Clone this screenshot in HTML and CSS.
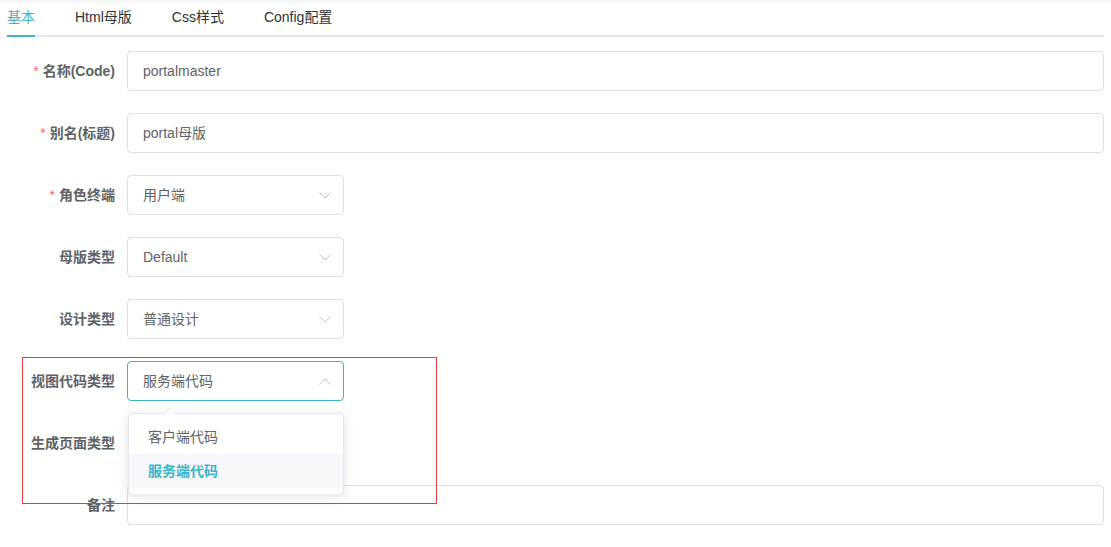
FILE: index.html
```html
<!DOCTYPE html>
<html lang="zh-CN">
<head>
<meta charset="utf-8">
<title>母版编辑</title>
<link rel="stylesheet" href="styles.css">
</head>
<body>
<div class="page">
  <div class="tabs">
    <div class="tab active">基本</div>
    <div class="tab">Html母版</div>
    <div class="tab">Css样式</div>
    <div class="tab">Config配置</div>
  </div>

  <div class="form">
    <div class="form-item">
      <label class="label"><span class="req">*</span>名称(Code)</label>
      <div class="control"><div class="input wide">portalmaster</div></div>
    </div>
    <div class="form-item">
      <label class="label"><span class="req">*</span>别名(标题)</label>
      <div class="control"><div class="input wide">portal母版</div></div>
    </div>
    <div class="form-item">
      <label class="label"><span class="req">*</span>角色终端</label>
      <div class="control">
        <div class="input select">用户端
          <svg class="arrow" width="12" height="7" viewBox="0 0 12 7"><polyline points="0.5,0.5 6,6 11.5,0.5" fill="none" stroke="#c0c4cc" stroke-width="1"/></svg>
        </div>
      </div>
    </div>
    <div class="form-item">
      <label class="label">母版类型</label>
      <div class="control">
        <div class="input select">Default
          <svg class="arrow" width="12" height="7" viewBox="0 0 12 7"><polyline points="0.5,0.5 6,6 11.5,0.5" fill="none" stroke="#c0c4cc" stroke-width="1"/></svg>
        </div>
      </div>
    </div>
    <div class="form-item">
      <label class="label">设计类型</label>
      <div class="control">
        <div class="input select">普通设计
          <svg class="arrow" width="12" height="7" viewBox="0 0 12 7"><polyline points="0.5,0.5 6,6 11.5,0.5" fill="none" stroke="#c0c4cc" stroke-width="1"/></svg>
        </div>
      </div>
    </div>
    <div class="form-item">
      <label class="label">视图代码类型</label>
      <div class="control">
        <div class="input select focused">服务端代码
          <svg class="arrow" width="12" height="7" viewBox="0 0 12 7"><polyline points="0.5,6.5 6,1 11.5,6.5" fill="none" stroke="#c0c4cc" stroke-width="1"/></svg>
        </div>
        <div class="dropdown">
          <div class="dropdown-arrow"></div>
          <div class="option">客户端代码</div>
          <div class="option selected">服务端代码</div>
        </div>
      </div>
    </div>
    <div class="form-item">
      <label class="label">生成页面类型</label>
      <div class="control"></div>
    </div>
    <div class="form-item">
      <label class="label">备注</label>
      <div class="control"><div class="input wide"></div></div>
    </div>
  </div>

  <div class="annotation"></div>
</div>
</body>
</html>
```

FILE: styles.css
```css
html, body {
  margin: 0;
  padding: 0;
  background: #fff;
}

body {
  font-family: "Liberation Sans", Arial, "Noto Sans CJK SC", sans-serif;
  font-size: 14px;
  color: #606266;
}

.page {
  position: relative;
  padding: 0 7px;
  height: 547px;
  box-sizing: border-box;
  background: linear-gradient(to bottom, #f3f3f3 0, #fff 4px);
}

.tabs {
  display: flex;
  gap: 40px;
  border-bottom: 2px solid #e4e7ed;
  margin-bottom: 14px;
}

.tab {
  height: 35px;
  line-height: 35px;
  margin-bottom: -2px;
  border-bottom: 2px solid transparent;
  color: #303133;
  white-space: nowrap;
}

.tab.active {
  color: #3db4c8;
  border-bottom-color: #3db4c8;
}

.form-item {
  display: flex;
  margin-bottom: 22px;
  height: 40px;
}

.label {
  width: 120px;
  flex: none;
  box-sizing: border-box;
  padding-right: 12px;
  text-align: right;
  line-height: 40px;
  font-weight: bold;
  color: #606266;
  white-space: nowrap;
}

.req {
  color: #f56c6c;
  font-weight: normal;
  margin-right: 4px;
}

.control {
  position: relative;
  flex: 1;
}

.input {
  position: relative;
  box-sizing: border-box;
  height: 40px;
  line-height: 38px;
  border: 1px solid #dcdfe6;
  border-radius: 4px;
  padding: 0 15px;
  color: #606266;
  background: #fff;
}

.input.wide {
  width: 100%;
}

.input.select {
  width: 217px;
}

.input.focused {
  border-color: #3db4c8;
}

.arrow {
  position: absolute;
  right: 12px;
  top: 16px;
}

.dropdown {
  position: absolute;
  z-index: 5;
  left: 1px;
  top: 52px;
  width: 216px;
  box-sizing: border-box;
  border: 1px solid #e4e7ed;
  border-radius: 4px;
  background: #fff;
  box-shadow: 0 2px 12px rgba(0, 0, 0, 0.1);
  padding: 6px 0;
}

.dropdown-arrow {
  position: absolute;
  left: 34px;
  top: -6px;
  width: 0;
  height: 0;
  border-left: 6px solid transparent;
  border-right: 6px solid transparent;
  border-bottom: 6px solid #e4e7ed;
}

.dropdown-arrow::after {
  content: "";
  position: absolute;
  left: -6px;
  top: 1px;
  border-left: 6px solid transparent;
  border-right: 6px solid transparent;
  border-bottom: 6px solid #fff;
}

.option {
  height: 34px;
  line-height: 34px;
  padding: 0 19px;
  color: #606266;
}

.option.selected {
  background: #f5f7fa;
  color: #3db4c8;
  font-weight: bold;
}

.annotation {
  position: absolute;
  left: 22px;
  top: 357px;
  width: 415px;
  height: 147px;
  box-sizing: border-box;
  border: 1px solid #ec3b3b;
  pointer-events: none;
  z-index: 10;
}
```
